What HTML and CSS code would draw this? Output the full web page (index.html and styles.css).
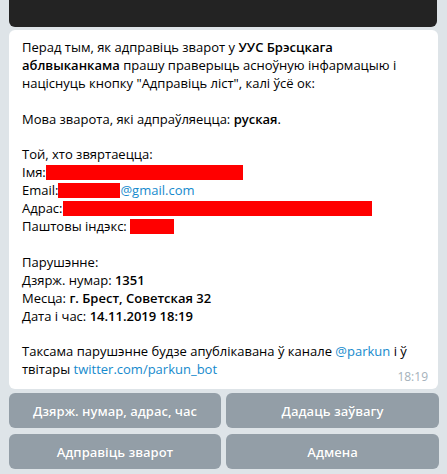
FILE: index.html
```html
<!DOCTYPE html>
<html>
<head>
<meta charset="utf-8">
<link rel="stylesheet" href="styles.css">
</head>
<body>
<div class="wrap">
  <div class="dark"></div>
  <div class="bubble">
    <p>Перад тым, як адправіць зварот у <b>УУС Брэсцкага аблвыканкама</b> прашу праверыць асноўную інфармацыю і націснуць кнопку "Адправіць ліст", калі ўсё ок:</p>
    <p>Мова зварота, які адпраўляецца: <b>руская</b>.</p>
    <p>Той, хто звяртаецца:<br>
    Імя:<span class="red r1"></span><br>
    Email:<span class="red r2"></span><a class="link">@gmail.com</a><br>
    Адрас:<span class="red r3"></span><br>
    Паштовы індэкс: <span class="red r4"></span></p>
    <p>Парушэнне:<br>
    Дзярж. нумар: <b>1351</b><br>
    Месца: <b>г. Брест, Советская 32</b><br>
    Дата і час: <b>14.11.2019 18:19</b></p>
    <p>Таксама парушэнне будзе апублікавана ў канале <a class="link">@parkun</a> і ў твітары <a class="link">twitter.com/parkun_bot</a></p>
    <span class="time">18:19</span>
  </div>
  <div class="buttons">
    <div class="btn">Дзярж. нумар, адрас, час</div>
    <div class="btn">Дадаць заўвагу</div>
    <div class="btn">Адправіць зварот</div>
    <div class="btn">Адмена</div>
  </div>
</div>
</body>
</html>
```
FILE: styles.css
```css
html, body {
  margin: 0;
  padding: 0;
}
body {
  width: 447px;
  height: 474px;
  overflow: hidden;
  background: #dee4e8;
  font-family: "Open Sans", "Noto Sans", sans-serif;
  font-size: 13px;
  color: #000;
}
.wrap {
  padding: 0 8px 0 9px;
  display: flex;
  flex-direction: column;
}
.dark {
  height: 27px;
  width: 428px;
  background: #232323;
  border-radius: 0 0 6px 6px;
}
.bubble {
  position: relative;
  margin-top: 3px;
  width: 429px;
  box-sizing: border-box;
  background: #fff;
  border-radius: 6px;
  padding: 9px 12px 10px 13px;
  line-height: 17.9px;
}
.bubble p {
  margin: 0 0 17.9px 0;
}
.bubble p:last-of-type {
  margin-bottom: 0;
}
b {
  font-weight: 600;
}
.link {
  color: #168acd;
}
.red {
  display: inline-block;
  background: #ff0000;
  height: 15px;
  vertical-align: -3px;
}
.r1 { width: 197px; }
.r2 { width: 62px; }
.r3 { width: 309px; }
.r4 { width: 44px; }
.time {
  position: absolute;
  right: 10px;
  bottom: 4px;
  font-size: 12px;
  line-height: 16px;
  color: #a5b1ba;
}
.buttons {
  margin-top: 4px;
  display: grid;
  grid-template-columns: 212px 213px;
  column-gap: 5px;
  row-gap: 6px;
}
.btn {
  height: 35px;
  border-radius: 6px;
  background: #939ea7;
  color: #fff;
  font-weight: 600;
  display: flex;
  align-items: center;
  justify-content: center;
  text-shadow: 0 0 1px rgba(0,0,0,0.15);
}
```
